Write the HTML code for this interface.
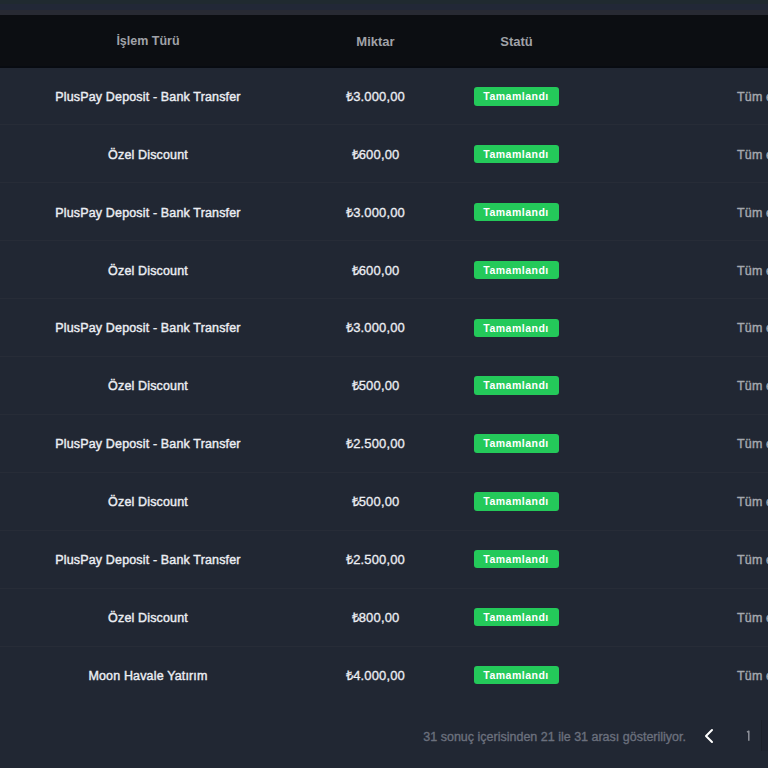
<!DOCTYPE html>
<html><head><meta charset="utf-8">
<style>
html,body{margin:0;padding:0;}
body{width:768px;height:768px;overflow:hidden;position:relative;background:#212733;font-family:"Liberation Sans",sans-serif;}
.top0{position:absolute;left:0;top:0;width:768px;height:4px;background:#202a30;}
.top1{position:absolute;left:0;top:4px;width:768px;height:6px;background:#222837;}
.top2{position:absolute;left:0;top:10px;width:768px;height:5px;background:#282a33;}
.head{position:absolute;left:0;top:15px;width:768px;height:53px;background:#0c0e12;box-shadow:inset 0 -2px 0 #080b11;}
.h{position:absolute;top:0;height:53px;line-height:53px;font-size:13px;font-weight:bold;color:#a0a2a8;white-space:nowrap;width:120px;text-align:center;}
.row{position:absolute;left:0;width:768px;height:57.85px;}
.sep{position:absolute;left:0;width:768px;height:1px;background:#272c37;}
.c1{position:absolute;left:0;width:296px;text-align:center;top:1px;line-height:57px;font-size:12.5px;-webkit-text-stroke:0.4px #eceef3;letter-spacing:0.15px;color:#eceef3;white-space:nowrap;}
.c2{position:absolute;left:275.5px;width:200px;text-align:center;top:0px;line-height:57px;font-size:13px;-webkit-text-stroke:0.3px #eceef3;letter-spacing:0.15px;color:#eceef3;white-space:nowrap;}
.badge{position:absolute;left:473.5px;top:19.2px;width:85px;height:18.4px;border-radius:3px;background:#24c95a;color:#fff;font-size:10.5px;letter-spacing:0.5px;font-weight:bold;text-align:center;line-height:16.5px;}
.badge span{position:relative;top:1px;}
.c4{position:absolute;left:737px;top:1px;line-height:57px;font-size:12.5px;-webkit-text-stroke:0.4px #a4a7ae;letter-spacing:0.15px;color:#a4a7ae;white-space:nowrap;}
.foot{position:absolute;right:82px;top:730px;font-size:12.5px;-webkit-text-stroke:0.35px #6b707d;color:#6b707d;white-space:nowrap;}
.chev{position:absolute;left:702px;top:728px;}
.pg1{position:absolute;left:744px;top:729px;}
.pbox{position:absolute;left:761px;top:720px;width:20px;height:31px;background:#1f2430;border-left:1px solid #1b2029;}
</style></head><body>
<div class="top0"></div><div class="top1"></div><div class="top2"></div>
<div class="head">
<div class="h" style="left:88px;font-size:12.5px">İşlem Türü</div>
<div class="h" style="left:315.5px">Miktar</div>
<div class="h" style="left:456.5px">Statü</div>
</div>
<div class="sep" style="top:124.25px"></div><div class="sep" style="top:182.20px"></div><div class="sep" style="top:240.15px"></div><div class="sep" style="top:298.10px"></div><div class="sep" style="top:356.05px"></div><div class="sep" style="top:414.00px"></div><div class="sep" style="top:471.95px"></div><div class="sep" style="top:529.90px"></div><div class="sep" style="top:587.85px"></div><div class="sep" style="top:645.80px"></div>
<div class="row" style="top:68.00px">
<div class="c1">PlusPay Deposit - Bank Transfer</div><div class="c2">₺3.000,00</div><div class="badge"><span>Tamamlandı</span></div><div class="c4">Tüm ekipler</div>
</div>
<div class="row" style="top:125.85px">
<div class="c1">Özel Discount</div><div class="c2">₺600,00</div><div class="badge"><span>Tamamlandı</span></div><div class="c4">Tüm ekipler</div>
</div>
<div class="row" style="top:183.70px">
<div class="c1">PlusPay Deposit - Bank Transfer</div><div class="c2">₺3.000,00</div><div class="badge"><span>Tamamlandı</span></div><div class="c4">Tüm ekipler</div>
</div>
<div class="row" style="top:241.55px">
<div class="c1">Özel Discount</div><div class="c2">₺600,00</div><div class="badge"><span>Tamamlandı</span></div><div class="c4">Tüm ekipler</div>
</div>
<div class="row" style="top:299.40px">
<div class="c1">PlusPay Deposit - Bank Transfer</div><div class="c2">₺3.000,00</div><div class="badge"><span>Tamamlandı</span></div><div class="c4">Tüm ekipler</div>
</div>
<div class="row" style="top:357.25px">
<div class="c1">Özel Discount</div><div class="c2">₺500,00</div><div class="badge"><span>Tamamlandı</span></div><div class="c4">Tüm ekipler</div>
</div>
<div class="row" style="top:415.10px">
<div class="c1">PlusPay Deposit - Bank Transfer</div><div class="c2">₺2.500,00</div><div class="badge"><span>Tamamlandı</span></div><div class="c4">Tüm ekipler</div>
</div>
<div class="row" style="top:472.95px">
<div class="c1">Özel Discount</div><div class="c2">₺500,00</div><div class="badge"><span>Tamamlandı</span></div><div class="c4">Tüm ekipler</div>
</div>
<div class="row" style="top:530.80px">
<div class="c1">PlusPay Deposit - Bank Transfer</div><div class="c2">₺2.500,00</div><div class="badge"><span>Tamamlandı</span></div><div class="c4">Tüm ekipler</div>
</div>
<div class="row" style="top:588.65px">
<div class="c1">Özel Discount</div><div class="c2">₺800,00</div><div class="badge"><span>Tamamlandı</span></div><div class="c4">Tüm ekipler</div>
</div>
<div class="row" style="top:646.50px">
<div class="c1">Moon Havale Yatırım</div><div class="c2">₺4.000,00</div><div class="badge"><span>Tamamlandı</span></div><div class="c4">Tüm ekipler</div>
</div>
<div class="foot">31 sonuç içerisinden 21 ile 31 arası gösteriliyor.</div>
<svg class="chev" width="14" height="16" viewBox="0 0 14 16"><path d="M10 2 L4 8 L10 14" stroke="#ffffff" stroke-width="2" fill="none" stroke-linecap="round" stroke-linejoin="round"/></svg>
<svg class="pg1" width="8" height="14" viewBox="0 0 8 14"><path d="M3 3.2 L4.8 2.2 L4.8 11.8" stroke="#8e9199" stroke-width="1.5" fill="none" stroke-linejoin="round"/></svg>
<div class="pbox"></div>
</body></html>
